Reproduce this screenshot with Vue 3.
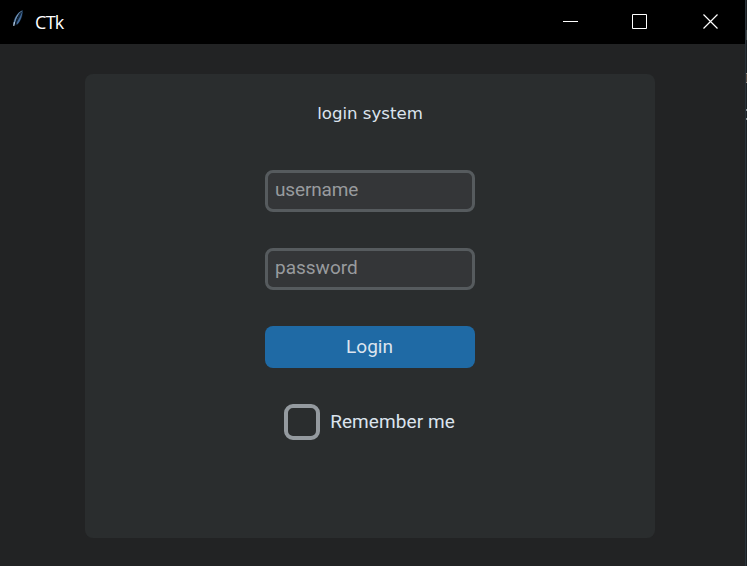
<script setup>
import { ref } from 'vue'

const username = ref('')
const password = ref('')
const remember = ref(false)
</script>

<template>
  <div class="desktop">
    <div class="window">
      <header class="titlebar">
        <svg class="feather" width="14" height="20" viewBox="0 0 14 20">
          <path d="M1 15.500C1 8.500 5 2 11 0C11 6.500 8.500 12.500 4.500 15Z" fill="#10263d" />
          <path d="M1.500 15C2 8.500 5 3 10.500 .200C7.500 4 5 8 3 14Z" fill="#6f92b7" />
          <path d="M10.500 1C10 7 8 12 5 14.500L4.600 13C7 9 9 5 10.500 1Z" fill="#456b99" />
          <path d="M3 15.500C4 10 6 6 8.500 2.500" fill="none" stroke="#07111d" stroke-width="1" />
          <path d="M1.800 16L2.300 12" stroke="#c4d6e7" stroke-width="1" />
        </svg>
        <span class="title">CTk</span>
        <div class="controls">
          <svg width="16" height="16" viewBox="0 0 16 16"><path d="M0 8.500H15" /></svg>
          <svg width="16" height="16" viewBox="0 0 16 16"><path d="M.500 1.500H14.500V15.500H.500Z" /></svg>
          <svg width="16" height="16" viewBox="0 0 16 16"><path class="cross" d="M.500 1.500L14.500 15.500M14.500 1.500L.500 15.500" /></svg>
        </div>
      </header>
      <main class="content">
        <form class="card" @submit.prevent>
          <h1>login system</h1>
          <input v-model="username" class="field username" type="text" placeholder="username" />
          <input v-model="password" class="field" type="password" placeholder="password" />
          <button class="login" type="submit">Login</button>
          <label class="remember">
            <input v-model="remember" type="checkbox" />
            <span>Remember me</span>
          </label>
        </form>
      </main>
    </div>
    <div class="edge">
      <i class="mark faint"></i>
      <i class="mark frame"></i>
      <i class="mark dots"></i>
    </div>
  </div>
</template>

<style>
body {
  margin: 0;
  overflow: hidden;
}
</style>

<style scoped>
.desktop {
  display: flex;
  width: 747px;
  height: 566px;
  background: #222324;
}
.window {
  display: flex;
  flex-direction: column;
  width: 745px;
}
.titlebar {
  display: flex;
  box-sizing: border-box;
  height: 44px;
  padding-left: 12px;
  background: #000;
  color: #fff;
}
.feather {
  margin-top: 10px;
}
.title {
  margin-left: 9px;
  font: 18px/44px "Open Sans", "Noto Sans", sans-serif;
  letter-spacing: -0.7px;
}
.controls {
  display: flex;
  gap: 54px;
  margin: 13px 26px 0 auto;
}
.controls svg {
  fill: none;
  stroke: #fff;
  stroke-width: 1;
}
.controls svg:nth-child(2) {
  margin: 0 1px 0 -1px;
}
.controls .cross {
  stroke-width: 1.2;
}
.content {
  flex: 1;
  padding: 30px 0 0 85px;
}
.card {
  display: flex;
  flex-direction: column;
  align-items: center;
  box-sizing: border-box;
  width: 570px;
  height: 464px;
  padding-top: 25px;
  border-radius: 8px;
  background: #2a2d2e;
  font-family: Roboto, sans-serif;
}
h1 {
  margin: 0 0 41px;
  color: #dce4ee;
  font: 400 16.6px/30px "DejaVu Sans", sans-serif;
}
.field,
.login {
  box-sizing: border-box;
  width: 210px;
  height: 42px;
  margin: 0 0 36px;
  border-radius: 8px;
  font: 400 19px/22px Roboto, sans-serif;
}
.field {
  padding: 0 7px 3px;
  border: 3px solid #565b5e;
  outline: none;
  background: #343638;
  color: #dce4ee;
}
.field::placeholder {
  color: #989b9e;
  opacity: 1;
}
.username {
  letter-spacing: -0.15px;
}
.login {
  padding: 0 1px 0 0;
  border: 0;
  background: #1f6aa5;
  color: #dce4ee;
}
.remember {
  display: flex;
  align-items: center;
  gap: 10px;
  height: 36px;
  padding-right: 1px;
  color: #dce4ee;
  font-size: 19px;
  letter-spacing: 0.08px;
  line-height: 22px;
}
.remember input {
  box-sizing: border-box;
  width: 36px;
  height: 36px;
  margin: 0;
  border: 4px solid #949a9f;
  border-radius: 9px;
  appearance: none;
}
.remember input:checked {
  background: #1f6aa5;
}
.edge {
  display: flex;
  flex-direction: column;
  box-sizing: border-box;
  width: 2px;
  padding-top: 30px;
  border-left: 1px solid #29333a;
  background: #1b2024;
}
.mark {
  width: 1px;
}
.faint {
  height: 10px;
  background: #3b4245;
}
.frame {
  height: 8px;
  margin-top: 33px;
  border: solid #8b8780;
  border-width: 1px 0;
  background: #574a40;
}
.dots {
  height: 7px;
  margin-top: 26px;
  border: solid #8c9295;
  border-width: 2px 0;
}
</style>
